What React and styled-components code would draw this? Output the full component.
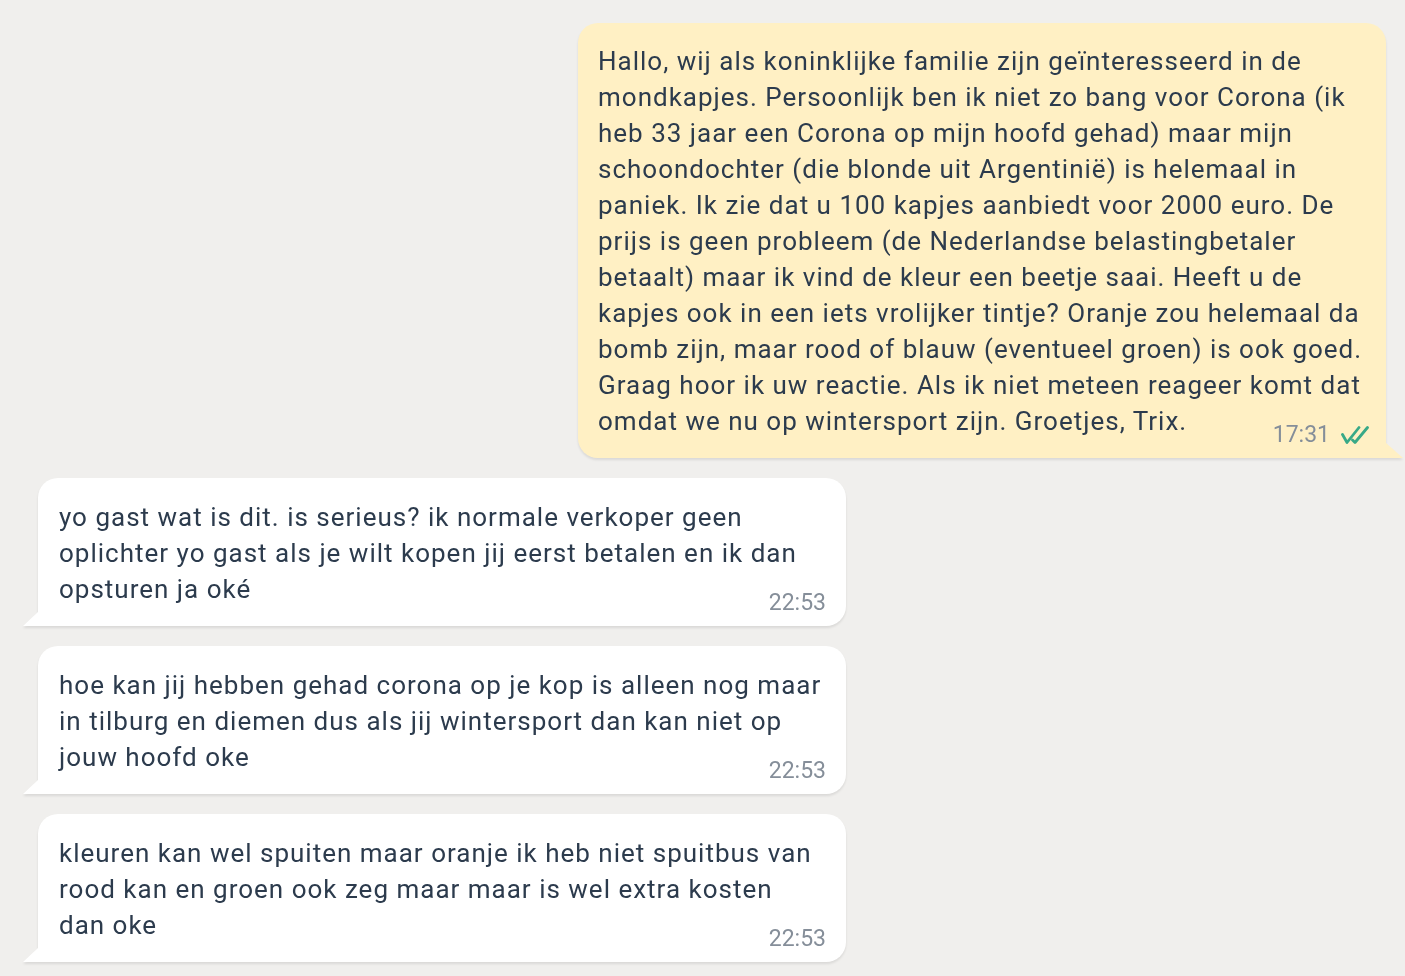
import React from "react";
import styled, { createGlobalStyle, css } from "styled-components";

const Global = createGlobalStyle`
  html, body { margin: 0; padding: 0; background: #f0efed; }
  body { font-family: Roboto, "Noto Sans", Arial, sans-serif; }
`;

const Page = styled.div`
  display: flex;
  flex-direction: column;
  gap: 20px;
  padding: 23px 19px 20px 38px;
  min-height: 976px;
  box-sizing: border-box;
`;

const Row = styled.div`
  display: flex;
  justify-content: ${(p) => (p.$out ? "flex-end" : "flex-start")};
`;

const Bubble = styled.div`
  position: relative;
  width: 808px;
  box-sizing: border-box;
  padding: ${(p) => (p.$out ? "20px 20px 19px 20px" : "21px 22px 19px 21px")};
  font-size: 26px;
  line-height: 36px;
  letter-spacing: 1px;
  color: #2c3b4d;
  background: ${(p) => (p.$out ? "#fff0c4" : "#ffffff")};
  filter: drop-shadow(0 2px 1px rgba(0, 0, 0, 0.09));
  ${(p) =>
    p.$out
      ? css`
          border-radius: 20px 20px 0 20px;
          &::after {
            content: "";
            position: absolute;
            right: -17px;
            bottom: 0;
            width: 0;
            height: 0;
            border-bottom: 15px solid #fff0c4;
            border-right: 17px solid transparent;
          }
        `
      : css`
          border-radius: 20px 20px 20px 0;
          &::after {
            content: "";
            position: absolute;
            left: -15px;
            bottom: 0;
            width: 0;
            height: 0;
            border-bottom: 14px solid #ffffff;
            border-left: 15px solid transparent;
          }
        `}
`;

const Meta = styled.span`
  float: right;
  position: relative;
  top: 20px;
  margin-left: 20px;
  margin-right: ${(p) => (p.$out ? "-3px" : "-2px")};
  display: inline-flex;
  align-items: center;
  gap: 11px;
  height: 24px;
  font-size: 23px;
  line-height: 24px;
  letter-spacing: 0;
  color: #858e99;
`;

const Check = () => (
  <svg width="28" height="20" viewBox="0 0 28 20" fill="none">
    <path d="M1.5 9.5 L6 17.5 L18 2.5" stroke="#38a987" strokeWidth="2.8" strokeLinecap="round" strokeLinejoin="round" />
    <path d="M11.5 15 L14 17.5 L26.5 2.5" stroke="#38a987" strokeWidth="2.8" strokeLinecap="round" strokeLinejoin="round" />
  </svg>
);

const messages = [
  {
    out: true,
    time: "17:31",
    text:
      "Hallo, wij als koninklijke familie zijn geïnteresseerd in de mondkapjes. Persoonlijk ben ik niet zo bang voor Corona (ik heb 33 jaar een Corona op mijn hoofd gehad) maar mijn schoondochter (die blonde uit Argentinië) is helemaal in paniek. Ik zie dat u 100 kapjes aanbiedt voor 2000 euro. De prijs is geen probleem (de Nederlandse belastingbetaler betaalt) maar ik vind de kleur een beetje saai. Heeft u de kapjes ook in een iets vrolijker tintje? Oranje zou helemaal da bomb zijn, maar rood of blauw (eventueel groen) is ook goed. Graag hoor ik uw reactie. Als ik niet meteen reageer komt dat omdat we nu op wintersport zijn. Groetjes, Trix.",
  },
  {
    out: false,
    time: "22:53",
    text:
      "yo gast wat is dit. is serieus? ik normale verkoper geen oplichter yo gast als je wilt kopen jij eerst betalen en ik dan opsturen ja oké",
  },
  {
    out: false,
    time: "22:53",
    text:
      "hoe kan jij hebben gehad corona op je kop is alleen nog maar in tilburg en diemen dus als jij wintersport dan kan niet op jouw hoofd oke",
  },
  {
    out: false,
    time: "22:53",
    text:
      "kleuren kan wel spuiten maar oranje ik heb niet spuitbus van rood kan en groen ook zeg maar maar is wel extra kosten dan oke",
  },
];

export default function App() {
  return (
    <>
      <Global />
      <Page>
        {messages.map((m, i) => (
          <Row key={i} $out={m.out}>
            <Bubble $out={m.out}>
              {m.text}
              <Meta $out={m.out}>
                {m.time}
                {m.out && <Check />}
              </Meta>
            </Bubble>
          </Row>
        ))}
      </Page>
    </>
  );
}
